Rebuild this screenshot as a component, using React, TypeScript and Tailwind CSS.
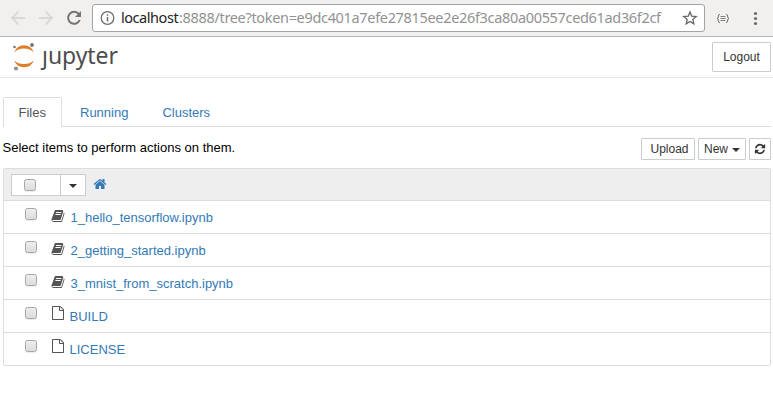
import type { ReactNode } from "react";

const BOOK =
  "M1703 478q40 57 18 129l-275 906q-19 64-76.5 107.5t-122.5 43.5h-923q-77 0-148.5-53.5t-99.5-131.5q-24-67-2-127 0-4 3-27t4-37q1-8-3-21.5t-3-19.5q2-11 8-21t16.5-23.5 16.5-23.5q23-38 45-91.5t30-91.5q3-10 .5-30t-.5-28q3-11 17-28t17-23q21-36 42-92t25-90q1-9-2.5-32t.5-28q4-13 22-30.5t22-22.5q19-26 42.5-84.5t27.5-96.5q1-8-3-25.5t-2-26.5q2-8 9-18t18-23 17-21q8-12 16.5-30.5t15-35 16-36 19.5-32 26.5-23.5 36-11.5 47.5 5.5l-1 3q38-9 51-9h761q74 0 114 56t18 130l-274 906q-36 119-71.5 153.5t-128.5 34.5h-869q-27 0-38 15-11 16-1 43 24 70 144 70h923q29 0 56-15.5t35-41.5l300-987q7-22 5-57 38 15 59 43zm-1064 2q-4 13 2 22.5t20 9.5h608q13 0 25.5-9.5t16.5-22.5l21-64q4-13-2-22.5t-20-9.5h-608q-13 0-25.5 9.5t-16.5 22.5zm-83 256q-4 13 2 22.5t20 9.5h608q13 0 25.5-9.5t16.5-22.5l21-64q4-13-2-22.5t-20-9.5h-608q-13 0-25.5 9.5t-16.5 22.5z";
const FILE =
  "M1596 380q28 28 48 76t20 88v1152q0 40-28 68t-68 28h-1344q-40 0-68-28t-28-68v-1600q0-40 28-68t68-28h896q40 0 88 20t76 48zm-444-244v376h376q-10-29-22-41l-313-313q-12-12-41-22zm384 1528v-1024h-416q-40 0-68-28t-28-68v-416h-768v1536h1280z";
const HOME =
  "M1472 992v480q0 26-19 45t-45 19h-384v-384h-256v384h-384q-26 0-45-19t-19-45v-480q0-1 .5-3t.5-3l575-474 575 474q1 2 1 6zm223-69l-62 74q-8 9-21 11h-3q-13 0-21-7l-692-577-692 577q-12 8-24 7-13-2-21-11l-62-74q-8-10-7-23.5t11-21.5l719-599q32-26 76-26t76 26l244 204v-195q0-14 9-23t23-9h192q14 0 23 9t9 23v408l219 182q10 8 11 21.5t-7 23.5z";
const REFRESH =
  "M1639 1056q0 5-1 7-64 268-268 434.5t-478 166.5q-146 0-282.5-55t-243.5-157l-129 129q-19 19-45 19t-45-19-19-45v-448q0-26 19-45t45-19h448q26 0 45 19t19 45-19 45l-137 137q71 66 161 102t187 36q134 0 250-65t186-179q11-17 53-117 8-23 30-23h192q13 0 22.5 9.5t9.5 22.5zm25-800v448q0 26-19 45t-45 19h-448q-26 0-45-19t-19-45 19-45l138-138q-148-137-349-137-134 0-250 65t-186 179q-11 17-53 117-8 23-30 23h-199q-13 0-22.5-9.5t-9.5-22.5v-7q65-268 270-434.5t480-166.5q146 0 284 55.5t245 156.5l130-129q19-19 45-19t45 19 19 45z";

function Glyph({ d, className }: { d: string; className: string }) {
  return (
    <svg viewBox="0 0 1792 1792" fill="currentColor" className={`shrink-0 overflow-visible ${className}`}>
      <path d={d} />
    </svg>
  );
}

function Checkbox() {
  return (
    <span
      role="checkbox"
      aria-checked="false"
      className="block size-3 shrink-0 rounded-[2.5px] border border-[#a6a6a6] bg-linear-to-b from-[#eeeeee] to-[#dcdcdc] shadow-[0_1px_1px_rgba(0,0,0,0.08)]"
    />
  );
}

function Caret() {
  return <span className="block size-0 border-x-4 border-t-4 border-x-transparent border-t-[#333]" />;
}

function Button({ className, children }: { className: string; children: ReactNode }) {
  return (
    <button className={`flex items-center rounded-[1px] border border-[#ccc] bg-white text-[12px] text-[#333] ${className}`}>
      {children}
    </button>
  );
}

function BrowserBar() {
  return (
    <div className="flex h-[37px] items-start border-b border-[#b5b4b9] bg-[#f1f0ef]">
      <div className="flex h-9 w-[92px] shrink-0 items-center">
        <svg viewBox="0 0 92 36" className="h-9 w-[92px]" fill="none" strokeWidth="1.8">
          <path d="M25 18H12.5M18.5 11.5 12 18l6.500 6.500M39 18h12.500M45.500 11.500 52 18l-6.500 6.500" stroke="#d9d8d7" />
          <path d="M78.800 14A6 6 0 1 0 79.700 20" stroke="#747474" strokeWidth="2" />
          <path d="M81 11v6h-6z" fill="#747474" />
        </svg>
      </div>
      <div className="mt-1 flex h-7 w-[613px] shrink-0 items-center rounded-[3px] border border-[#a5a4a4] bg-white pl-[7px] pr-[6px]">
        <svg viewBox="0 0 16 16" className="size-4 shrink-0" fill="none" stroke="#6b6b6b">
          <circle cx="7.500" cy="8" r="6.300" strokeWidth="1.300" />
          <path d="M7.500 7v4.500M7.500 4.300v1.500" strokeWidth="1.500" />
        </svg>
        <div className="ml-[5px] flex h-6 items-center whitespace-nowrap font-['Noto_Sans',sans-serif] text-[14.500px] text-[#929292]">
          <span className="w-[58px] shrink-0 tracking-[-0.450px] text-[#222]">localhost</span>
          <span className="tracking-[-0.330px]">:8888/tree?token=e9dc401a7efe27815ee2e26f3ca80a00557ced61ad36f2cf</span>
        </div>
        <svg viewBox="0 0 16 16" className="ml-auto size-4 shrink-0" fill="none" stroke="#666" strokeWidth="1.300">
          <path d="m8 2 1.700 4.100 4.500.4-3.400 2.900 1 4.400L8 11.500l-3.800 2.300 1-4.400-3.400-2.900 4.500-.4z" />
        </svg>
      </div>
      <svg viewBox="0 0 68 36" className="h-9 w-[68px] shrink-0" fill="none" stroke="#747474">
        <path d="M15 14.500q-1.700 0-1.700 1.500v1q0 1.300-1.300 1.500 1.300.2 1.300 1.500v1q0 1.500 1.700 1.500M21 14.500q1.700 0 1.700 1.500v1q0 1.300 1.300 1.500-1.300.2-1.300 1.500v1q0 1.500-1.700 1.500" />
        <path d="M15.500 16.500h5M15.500 18.500h5M15.500 20.500h5" strokeWidth="0.900" />
        <g fill="#6b6b6b" stroke="none">
          <circle cx="50.500" cy="13.500" r="1.600" />
          <circle cx="50.500" cy="18.500" r="1.600" />
          <circle cx="50.500" cy="23.500" r="1.600" />
        </g>
      </svg>
    </div>
  );
}

function Logo() {
  return (
    <div className="flex h-10 items-start">
      <svg viewBox="0 0 36 40" className="h-10 w-9 shrink-0">
        <path d="M14 15.500Q17 8.300 24 8.300T34 15.500Q30 11.400 24 11.400T14 15.500zM14 23.500Q17 30.300 24 30.300T34 23.500Q30 27 24 27T14 23.500z" fill="#dd7e2b" />
        <circle cx="14.500" cy="10" r="1.300" fill="#757575" />
        <circle cx="32" cy="8" r="1.900" fill="#757575" />
        <circle cx="16" cy="31.500" r="2.100" fill="#929292" />
      </svg>
      <span className="ml-[6px] mt-[2px] font-['Noto_Sans',sans-serif] text-[23px] leading-[32px] tracking-[-0.050px] text-[#4e4e4e]">
        ȷupyter
      </span>
    </div>
  );
}

const files = [
  { name: "1_hello_tensorflow.ipynb", notebook: true },
  { name: "2_getting_started.ipynb", notebook: true },
  { name: "3_mnist_from_scratch.ipynb", notebook: true },
  { name: "BUILD", notebook: false },
  { name: "LICENSE", notebook: false },
];

export default function App() {
  return (
    <div className="h-[405px] w-[773px] overflow-hidden bg-white font-['Liberation_Sans',Arial,sans-serif] text-[13px] text-black">
      <BrowserBar />
      <header className="flex h-[41px] items-start justify-between border-b border-[#e7e7e7] pr-[2px]">
        <Logo />
        <Button className="mt-[5px] h-[30px] w-[59px] justify-center">Logout</Button>
      </header>
      <nav className="ml-[3px] mr-[2px] mt-[19px] flex h-[30px] border-b border-[#ddd] text-[#337ab7]">
        <a className="h-[30px] w-[59px] rounded-t-[2px] border border-b-0 border-[#ddd] bg-white pl-[14.500px] leading-[29px] text-[#555]">
          Files
        </a>
        <a className="ml-[18px] leading-[31px]">Running</a>
        <a className="ml-[34px] leading-[31px]">Clusters</a>
      </nav>
      <div className="ml-[2.500px] mr-[2px] flex h-[41px] items-start justify-between">
        <span className="mt-[12px] leading-[18px]">Select items to perform actions on them.</span>
        <div className="mt-[11px] flex gap-[3px]">
          <Button className="h-[22px] w-[54px] pl-[8.500px]">Upload</Button>
          <Button className="h-[22px] w-[48px] gap-[4px] pl-[5px]">
            New
            <span className="mt-[2px]">
              <Caret />
            </span>
          </Button>
          <Button className="h-[22px] w-[22px] justify-center">
            <Glyph d={REFRESH} className="-mt-px size-[12px]" />
          </Button>
        </div>
      </div>
      <main className="ml-[3px] mr-[2px] h-[198px] rounded-[2px] border border-[#ddd]">
        <div className="flex h-[31px] items-start bg-[#eee]">
          <div className="ml-[7px] mt-[5px] flex h-[22px] w-[75px] border border-[#ccc] bg-white">
            <div className="flex w-[49px] items-center border-r border-[#ccc] pl-3">
              <Checkbox />
            </div>
            <div className="flex flex-1 items-center justify-center pt-[2px]">
              <Caret />
            </div>
          </div>
          <Glyph d={HOME} className="ml-[7px] mt-[8px] size-[14px] text-[#337ab7]" />
        </div>
        {files.map((f) => (
          <div key={f.name} className="flex h-[33px] items-start border-t border-[#ddd]">
            <div className="ml-[21px] mt-[7px]">
              <Checkbox />
            </div>
            <div className="ml-[14px] mt-[8px] flex w-[19.500px] shrink-0">
              {f.notebook ? (
                <Glyph d={BOOK} className="size-[14px] text-[#555]" />
              ) : (
                <Glyph d={FILE} className="-ml-[0.500px] -mt-[2px] size-[14px] text-[#555]" />
              )}
            </div>
            <a className={`mt-[8px] leading-[18px] text-[#337ab7] ${f.notebook ? "" : "-ml-px"}`}>{f.name}</a>
          </div>
        ))}
      </main>
    </div>
  );
}
